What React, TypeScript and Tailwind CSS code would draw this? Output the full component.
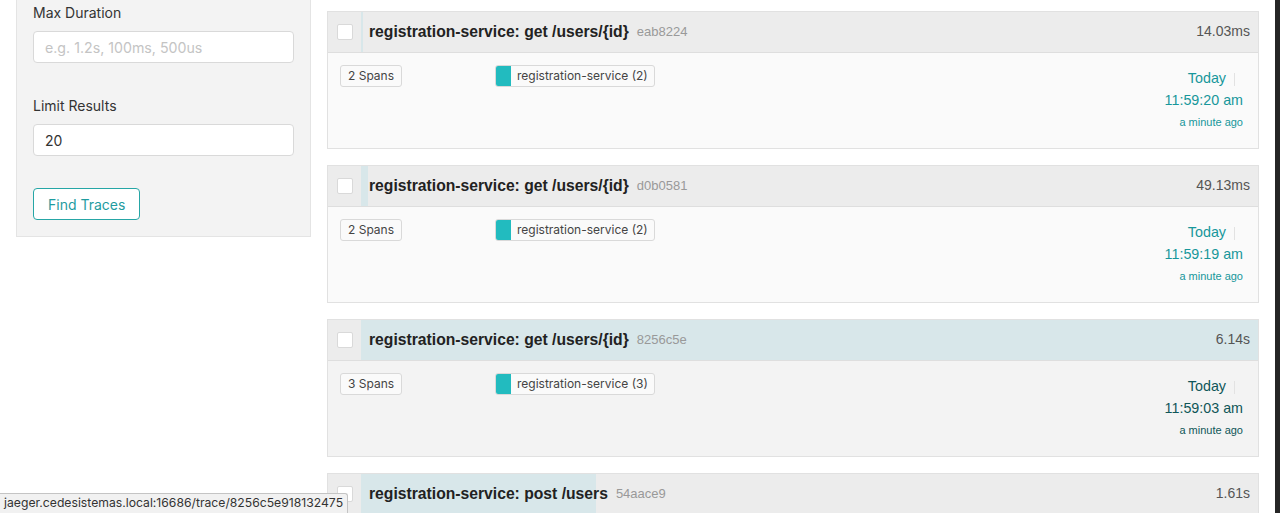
import type { ReactNode } from "react";

interface Trace {
  name: string;
  id: string;
  duration: string;
  ms: number;
  spans: number;
  time: string;
  active?: boolean;
}

const MAX_MS = 6140;
const BAR_AREA = 897;

const traces: Trace[] = [
  { name: "registration-service: get /users/{id}", id: "eab8224", duration: "14.03ms", ms: 14.03, spans: 2, time: "11:59:20 am" },
  { name: "registration-service: get /users/{id}", id: "d0b0581", duration: "49.13ms", ms: 49.13, spans: 2, time: "11:59:19 am" },
  { name: "registration-service: get /users/{id}", id: "8256c5e", duration: "6.14s", ms: 6140, spans: 3, time: "11:59:03 am", active: true },
  { name: "registration-service: post /users", id: "54aace9", duration: "1.61s", ms: 1610, spans: 1, time: "11:58:40 am" },
];

function Field({ label, children }: { label: string; children: ReactNode }) {
  return (
    <div className="flex flex-col">
      <label className="text-[14px] leading-[20px] text-[#333]">{label}</label>
      <div className="mt-[8px]">{children}</div>
    </div>
  );
}

function SearchPanel() {
  return (
    <div className="w-[295px] border border-[#e4e4e4] border-t-0 bg-[#f3f3f3] px-[16px] pt-[3px] pb-[16px] font-['Inter',sans-serif]">
      <Field label="Max Duration">
        <input
          placeholder="e.g. 1.2s, 100ms, 500us"
          className="h-[32px] w-full rounded-[4px] border border-[#d9d9d9] bg-white px-[11px] text-[14.2px] text-[#333] placeholder:text-[#c4c4c4] outline-none"
        />
      </Field>
      <div className="mt-[33px]">
        <Field label="Limit Results">
          <input
            defaultValue="20"
            className="h-[32px] w-full rounded-[4px] border border-[#d9d9d9] bg-white px-[11px] text-[14px] text-[#333] outline-none"
          />
        </Field>
      </div>
      <button className="mt-[32px] h-[32px] rounded-[4px] border border-[#26a6a6] bg-white px-[14px] text-[14px] text-[#1f9c9f]">
        Find Traces
      </button>
    </div>
  );
}

function TraceCard({ t }: { t: Trace }) {
  const bar = Math.max(2, Math.round((t.ms / MAX_MS) * BAR_AREA));
  const dateColor = t.active ? "text-[#0f5658]" : "text-[#17979b]";
  return (
    <div className="border border-[#e1e1e1] font-['Liberation_Sans',Arial,sans-serif]">
      {/* header with duration bar */}
      <div className="flex h-[41px] border-b border-[#dedede] bg-[#ececec]">
        <div className="flex w-[33px] shrink-0 items-center justify-center">
          <span className="h-[16px] w-[16px] rounded-[2px] border border-[#d9d9d9] bg-white" />
        </div>
        <div className="relative flex min-w-0 flex-1 items-center">
          <div className="absolute inset-y-0 left-0 bg-[#d8e7ea]" style={{ width: bar }} />
          <div className="relative flex flex-1 items-center pl-[8px] pr-[8px]">
            <span className="text-[15.7px] font-bold text-[#222]">{t.name}</span>
            <span className="ml-[8px] text-[13px] text-[#999]">{t.id}</span>
            <span className="ml-auto text-[14px] text-[#555]">{t.duration}</span>
          </div>
        </div>
      </div>
      {/* body */}
      <div className={`flex h-[95px] items-start pl-[12px] pr-[15px] pt-[12px] ${t.active ? "bg-[#f3f3f3]" : "bg-[#fafafa]"}`}>
        <div className="flex w-[155px] shrink-0">
          <span className="flex h-[22px] items-center rounded-[3px] border border-[#d9d9d9] bg-[#fafafa] px-[7px] font-['Inter',sans-serif] text-[12px] text-[#444]">
            {t.spans} Spans
          </span>
        </div>
        <div className="flex">
          <span className="flex h-[22px] items-stretch overflow-hidden rounded-[3px] border border-[#d9d9d9] bg-[#fafafa] font-['Inter',sans-serif] text-[12px] text-[#444]">
            <span className="w-[15px] bg-[#22bbbf]" />
            <span className="flex items-center px-[6px]">registration-service ({t.spans})</span>
          </span>
        </div>
        <div className={`ml-auto flex flex-col items-end pt-[3px] ${dateColor}`}>
          <div className="flex h-[22px] items-center text-[14.3px]">
            Today
            <span className="mx-[8px] h-[13px] w-px bg-[#e2e2e2]" />
          </div>
          <div className="text-[14.3px] leading-[20px]">{t.time}</div>
          <div className="mt-[5px] text-[11px] leading-[14px]">a minute ago</div>
        </div>
      </div>
    </div>
  );
}

export default function App() {
  return (
    <div className="relative flex h-[513px] w-[1280px] overflow-hidden bg-white">
      <div className="flex flex-1 gap-[16px] pl-[16px] pr-[16px]">
        <div className="shrink-0">
          <SearchPanel />
        </div>
        <div className="flex flex-1 flex-col gap-[16px] pt-[11px]">
          {traces.map((t, i) => (
            <TraceCard key={i} t={t} />
          ))}
        </div>
      </div>
      <div className="w-[5px] shrink-0 bg-[#262626]" />

      {/* browser status bar overlay */}
      <div className="absolute bottom-0 left-0 flex h-[20px] items-center rounded-tr-[3px] border-t border-r border-[#c4c4c4] bg-[#f1f1f1] px-[4px] font-['Inter',sans-serif] text-[12.2px] text-[#333]">
        jaeger.cedesistemas.local:16686/trace/8256c5e918132475
      </div>
    </div>
  );
}
